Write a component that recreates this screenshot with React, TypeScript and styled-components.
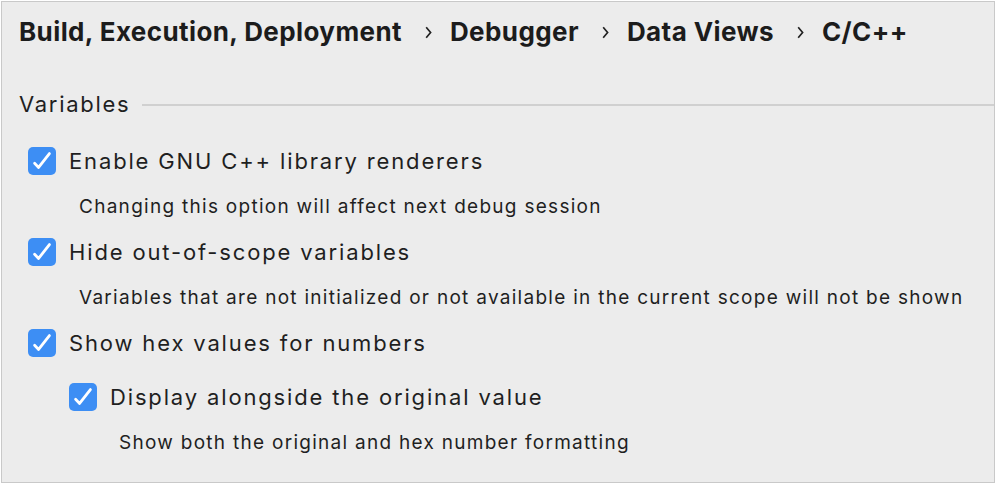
import React from "react";
import styled, { createGlobalStyle } from "styled-components";

const GlobalStyle = createGlobalStyle`
  html, body {
    margin: 0;
    padding: 0;
    background: #ffffff;
  }
  body {
    font-family: Inter, "Liberation Sans", sans-serif;
    color: #1f1f1f;
  }
`;

const Page = styled.div`
  padding: 1px 0 0 1px;
`;

const Panel = styled.div`
  width: 975px;
  height: 466px;
  border: 1px solid #c9c9c9;
  background: #ececec;
  padding: 14px 0 0 17px;
  box-sizing: content-box;
  display: flex;
  flex-direction: column;
  overflow: hidden;
`;

const Breadcrumbs = styled.div`
  display: flex;
  align-items: center;
  font-size: 26px;
  line-height: 32px;
  font-weight: 700;
  color: #1c1c1c;
  letter-spacing: 0.4px;
`;

const Chevron = styled.svg`
  width: 7px;
  height: 13px;
  margin: 1px 18px 0 23px;
  flex: none;
`;

const GroupTitle = styled.div`
  display: flex;
  align-items: center;
  margin-top: 43px;
  font-size: 22px;
  line-height: 26px;
  letter-spacing: 1.7px;
  color: #1f1f1f;

  &::after {
    content: "";
    flex: 1;
    height: 2px;
    background: #d0d0d0;
    margin-left: 12px;
    margin-top: 2px;
  }
`;

const Options = styled.div`
  display: flex;
  flex-direction: column;
  margin-top: 30px;
`;

const Row = styled.label<{ $level: number; $first?: boolean }>`
  display: flex;
  align-items: center;
  gap: 13px;
  height: 28px;
  margin-left: ${(p) => 9 + p.$level * 41}px;
  margin-top: ${(p) => (p.$first ? 0 : p.$level > 0 ? 26 : 19)}px;
  font-size: 22px;
  line-height: 28px;
  letter-spacing: 1.85px;
  color: #1f1f1f;
`;

const Box = styled.span`
  width: 28px;
  height: 28px;
  border-radius: 5px;
  background: #3d8ef4;
  display: flex;
  align-items: center;
  justify-content: center;
  flex: none;
`;

const Hint = styled.div<{ $level: number }>`
  margin-top: 20px;
  margin-left: ${(p) => 60 + p.$level * 40}px;
  font-size: 19px;
  line-height: 24px;
  letter-spacing: 1.28px;
  color: #1f1f1f;
`;

type Option = {
  label: string;
  hint?: string;
  level: number;
};

const crumbs = ["Build, Execution, Deployment", "Debugger", "Data Views", "C/C++"];

const options: Option[] = [
  {
    label: "Enable GNU C++ library renderers",
    hint: "Changing this option will affect next debug session",
    level: 0,
  },
  {
    label: "Hide out-of-scope variables",
    hint: "Variables that are not initialized or not available in the current scope will not be shown",
    level: 0,
  },
  { label: "Show hex values for numbers", level: 0 },
  {
    label: "Display alongside the original value",
    hint: "Show both the original and hex number formatting",
    level: 1,
  },
];

const Check = () => (
  <svg width="28" height="28" viewBox="0 0 28 28">
    <path
      d="M6.6 16.3 L10.6 20.4 L21.4 6.6"
      fill="none"
      stroke="#ffffff"
      strokeWidth="2.8"
      strokeLinecap="round"
      strokeLinejoin="round"
    />
  </svg>
);

const App = () => {
  return (
    <Page>
      <GlobalStyle />
      <Panel>
        <Breadcrumbs>
          {crumbs.map((c, i) => (
            <React.Fragment key={c}>
              {i > 0 && (
                <Chevron viewBox="0 0 7 13">
                  <path d="M1.2 1.2 L5.6 6.5 L1.2 11.8" fill="none" stroke="#222" strokeWidth="1.7" />
                </Chevron>
              )}
              <span>{c}</span>
            </React.Fragment>
          ))}
        </Breadcrumbs>
        <GroupTitle>Variables</GroupTitle>
        <Options>
          {options.map((o, i) => (
            <React.Fragment key={o.label}>
              <Row $level={o.level} $first={i === 0}>
                <Box>
                  <Check />
                </Box>
                <span>{o.label}</span>
              </Row>
              {o.hint && <Hint $level={o.level}>{o.hint}</Hint>}
            </React.Fragment>
          ))}
        </Options>
      </Panel>
    </Page>
  );
};

export default App;
